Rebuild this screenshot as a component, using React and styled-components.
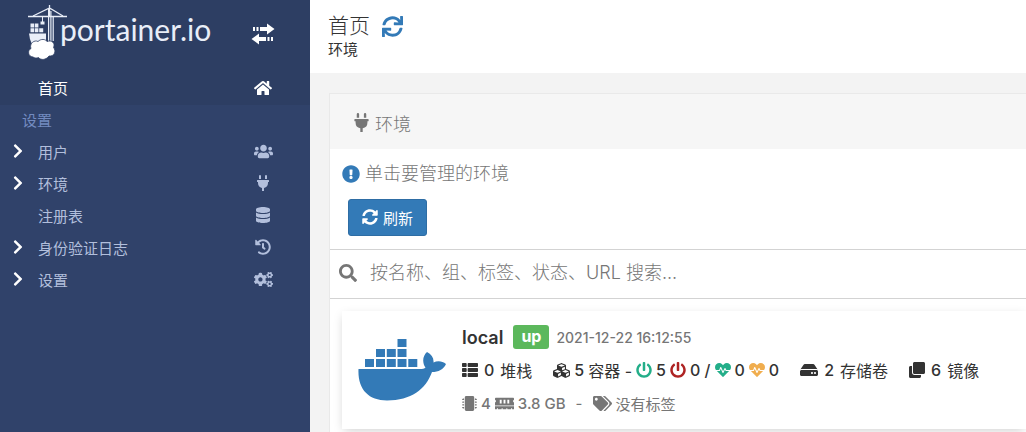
import React, { useState } from 'react'
import styled, { createGlobalStyle } from 'styled-components'
import {
    FaHome,
    FaUsers,
    FaPlug,
    FaDatabase,
    FaHistory,
    FaCogs,
    FaChevronRight,
    FaSync,
    FaSyncAlt,
    FaExclamationCircle,
    FaSearch,
    FaThList,
    FaCubes,
    FaPowerOff,
    FaHeartbeat,
    FaHdd,
    FaClone,
    FaMicrochip,
    FaMemory,
    FaTags,
} from 'react-icons/fa'

const GlobalStyle = createGlobalStyle`
    * {
        box-sizing: border-box;
    }
    body {
        margin: 0;
        background-color: #f3f3f3;
        color: #333333;
        font-family: "Inter", "Noto Sans CJK SC", sans-serif;
        font-size: 15px;
    }
    svg {
        flex-shrink: 0;
    }
`

const Container = styled.div`
    display: flex;
    min-height: 100vh;
    overflow: hidden;
`

// ---------------------------------------------------------------- sidebar

const Sidebar = styled.nav`
    width: 310px;
    flex-shrink: 0;
    background-color: #30426a;
`
const SidebarHeader = styled.div`
    height: 72px;
    display: flex;
    align-items: flex-start;
    justify-content: space-between;
    padding: 5px 35px 0 28px;
    background-color: #2d3e63;
`
const Logo = styled.a`
    display: flex;
    color: #e9eef8;
    text-decoration: none;
`
const LogoText = styled.span`
    font-family: "Lato", sans-serif;
    font-size: 30px;
    line-height: 40px;
    margin-left: -8px;
    padding-top: 4px;
`
const Toggle = styled.button`
    border: none;
    padding: 0;
    margin-top: 18px;
    background: none;
    color: white;
    cursor: pointer;
    display: flex;
`
const Menu = styled.ul`
    list-style: none;
    margin: 0;
    padding: 0;
`
const MenuTitle = styled.li`
    height: 31px;
    line-height: 31px;
    padding-left: 22px;
    color: #738bc0;
`
const MenuLink = styled.a`
    height: ${props => props.$active ? "33px" : "32px"};
    display: grid;
    grid-template-columns: 16px 1fr 20px;
    column-gap: 12px;
    align-items: center;
    justify-items: center;
    padding: 0 37px 2px 10px;
    font-size: 15px;
    text-decoration: none;
    color: ${props => props.$active ? "white" : "#b2bfdc"};
    background-color: ${props => props.$active ? "#2d3e63" : "transparent"};
`
const MenuArrow = styled.span`
    display: flex;
    color: white;
    font-size: 16px;
`
const MenuLabel = styled.span`
    justify-self: start;
`
const MenuIcon = styled.span`
    display: flex;
    font-size: ${props => props.$wide ? "19px" : "16px"};
`

// ---------------------------------------------------------------- content

const Content = styled.main`
    flex: 1;
    min-width: 0;
`
const PageHeader = styled.header`
    height: 73px;
    padding: 12px 18px 0;
    background-color: white;
`
const PageTitle = styled.h1`
    display: flex;
    align-items: center;
    gap: 12px;
    margin: 0;
    font-size: 21px;
    line-height: 28px;
    font-weight: 300;
`
const IconButton = styled.button`
    display: flex;
    border: none;
    padding: 0;
    background: none;
    color: #337ab7;
    font-size: 21px;
    cursor: pointer;
`
const Breadcrumb = styled.div`
    line-height: 20px;
`
const Widget = styled.section`
    margin: 20px 0 0 19px;
    border: 1px solid #e9e9e9;
    border-right: none;
    background-color: white;
    color: #767676;
`
const WidgetHeader = styled.h2`
    display: flex;
    align-items: center;
    gap: 4px;
    height: 55px;
    margin: 0;
    padding: 2px 22px 0;
    background-color: #f6f6f6;
    font-size: 18px;
    font-weight: 300;
`
const Hint = styled.p`
    display: flex;
    align-items: center;
    gap: 5px;
    margin: 0;
    padding: 12px 12px 0;
    font-size: 18px;
    line-height: 26px;
    font-weight: 300;

    svg {
        color: #337ab7;
    }
`
const RefreshButton = styled.button`
    display: flex;
    align-items: center;
    gap: 5px;
    height: 37px;
    margin: 12px 18px 13px;
    padding: 0 13px 1px;
    border: 1px solid #2e6da4;
    border-radius: 3px;
    background-color: #337ab7;
    color: white;
    font: inherit;
    font-size: 15px;
    cursor: pointer;
`
const SearchBar = styled.label`
    display: flex;
    align-items: center;
    gap: 13px;
    height: 50px;
    padding: 0 9px 3px;
    border-top: 1px solid #d3d3d3;
    border-bottom: 1px solid #d3d3d3;
    font-size: 18px;
`
const SearchInput = styled.input`
    flex: 1;
    min-width: 0;
    border: none;
    outline: none;
    padding: 0;
    background: none;
    font: inherit;
    font-weight: 300;
    color: #767676;

    &::placeholder {
        color: #767676;
        opacity: 1;
    }
`
const EndpointList = styled.div`
    padding: 12px 0 20px 12px;
`
const Endpoint = styled.article`
    display: flex;
    align-items: center;
    gap: 16px;
    height: 118px;
    padding: 0 16px;
    background-color: white;
    box-shadow: 0 3px 10px -2px #cccccc;
`
const EndpointInfo = styled.div`
    display: flex;
    flex-direction: column;
    gap: 9px;
`
const Line = styled.div`
    display: flex;
    align-items: center;
    gap: ${props => props.$gap};
    height: 24px;
    font-size: ${props => props.$muted ? "15px" : "16px"};
    white-space: nowrap;
    color: ${props => props.$muted ? "#767676" : "#333333"};
`
const Name = styled.a`
    color: #333333;
    font-size: 18px;
    font-weight: 600;
    text-decoration: none;
`
const Badge = styled.span`
    height: 24px;
    line-height: 23px;
    margin-left: 3px;
    padding: 0 8px;
    border-radius: 3px;
    background-color: #5cb85c;
    color: white;
    font-size: 16px;
    font-weight: 700;
`
const Time = styled.time`
    font-size: 14px;
    font-weight: 500;
    color: #767676;
`
const Stat = styled.span`
    display: flex;
    align-items: center;
    gap: ${props => props.$tight ? "4px" : "6px"};
`
const Num = styled.span`
    font-weight: 500;
`
const StatusIcon = styled.span`
    display: flex;
    font-size: 16px;
    color: ${props => props.color};
`

const menuItems = [
    { label: "用户", icon: <FaUsers />, arrow: true, wide: true },
    { label: "环境", icon: <FaPlug />, arrow: true },
    { label: "注册表", icon: <FaDatabase /> },
    { label: "身份验证日志", icon: <FaHistory />, arrow: true },
    { label: "设置", icon: <FaCogs />, arrow: true, wide: true },
]

const CraneLogo = () => (
    <svg width="40" height="56" viewBox="0 0 40 56" fill="none" stroke="#e9eef8" aria-hidden="true">
        <path d="M0 11.5H39" strokeWidth="1.6" />
        <path d="M5 11L21.5 3L35 11M21.5 0V12" strokeWidth="1.3" />
        <path d="M20.6 4V39M22.900 6V39M25.200 12V36" strokeWidth="1.2" />
        <path d="M14.500 12V17" strokeWidth="1" />
        <path d="M12.500 16.500h4v3h-4z" fill="#e9eef8" stroke="none" />
        <path d="M2.500 18.500h3.600v4H2.500zM6.800 18.500h3.600v4H6.800zM2.500 23.200h3.600v4H2.500zM6.800 23.200h3.600v4H6.800zM11.200 23.200h4v4h-4z" fill="#e9eef8" stroke="none" />
        <path d="M1 28.500H18V38H3.500Q1.500 34 1 28.500z" fill="#e9eef8" stroke="none" />
        <path d="M5 52C-.5 51.500-.5 45 3 43.500C1 38.500 6.500 34.500 10 36.500C13 33.500 17.500 34 19 36.500C24 34.500 27.500 38.500 25.500 42.500C28.500 46 26.500 51.500 21 51C18 55 13 55.500 10.500 52.500C8.500 53.500 6.500 53 5 52z" fill="white" stroke="#2d3e63" strokeWidth=".8" />
    </svg>
)

const TransferIcon = () => (
    <svg width="24" height="22" viewBox="0 0 24 22" fill="currentColor" aria-hidden="true">
        <path d="M2 4h2v4H2zM5.500 4h2v4h-2zM9 4h7V.5L23.500 6L16 11.500V8H9z" />
        <path d="M22 14h-2v4h2zM18.500 14h-2v4h2zM15 14H8v-3.500L.5 16L8 21.500V18h7z" />
    </svg>
)

const DockerIcon = () => (
    <svg width="88" height="62" viewBox="0 0 88 62" fill="#337ab7" aria-hidden="true">
        <path d="M39.500 0h9v8h-9z" />
        <path d="M18 10h9v8h-9zM28.800 10h9v8h-9zM39.500 10h9v8h-9z" />
        <path d="M7 20h9v8H7zM18 20h9v8h-9zM28.800 20h9v8h-9zM39.500 20h9v8h-9zM50.300 20h9v8h-9z" />
        <path d="M.5 30H62C64.500 30 66.500 29.500 67.500 28.500C64 23.500 64.500 17 69 13C73.500 15.500 76 19 75.500 23.500C79.500 21.500 84.500 22 88 25C85.500 30.500 80.500 33 74 33C68 50 53 61.500 29 61.500C10 61.500-.5 50 .5 30z" />
    </svg>
)

const App = () => {
    const [search, setSearch] = useState("")

    return (
        <Container>
            <GlobalStyle />
            <Sidebar>
                <SidebarHeader>
                    <Logo href="#" aria-label="portainer.io">
                        <CraneLogo />
                        <LogoText>portainer.io</LogoText>
                    </Logo>
                    <Toggle aria-label="切换侧边栏"><TransferIcon /></Toggle>
                </SidebarHeader>
                <Menu>
                    <li>
                        <MenuLink href="#home" $active>
                            <MenuArrow />
                            <MenuLabel>首页</MenuLabel>
                            <MenuIcon><FaHome size={18} /></MenuIcon>
                        </MenuLink>
                    </li>
                    <MenuTitle>设置</MenuTitle>
                    {menuItems.map((item) => (
                        <li key={item.label}>
                            <MenuLink href="#">
                                <MenuArrow>{item.arrow && <FaChevronRight />}</MenuArrow>
                                <MenuLabel>{item.label}</MenuLabel>
                                <MenuIcon $wide={item.wide}>{item.icon}</MenuIcon>
                            </MenuLink>
                        </li>
                    ))}
                </Menu>
            </Sidebar>

            <Content>
                <PageHeader>
                    <PageTitle>
                        首页
                        <IconButton aria-label="刷新页面"><FaSync /></IconButton>
                    </PageTitle>
                    <Breadcrumb>环境</Breadcrumb>
                </PageHeader>

                <Widget>
                    <WidgetHeader><FaPlug size={19} />环境</WidgetHeader>
                    <Hint><FaExclamationCircle />单击要管理的环境</Hint>
                    <RefreshButton><FaSyncAlt size={16} />刷新</RefreshButton>
                    <SearchBar>
                        <FaSearch />
                        <SearchInput
                            type="text"
                            aria-label="搜索"
                            placeholder="按名称、组、标签、状态、URL 搜索..."
                            value={search}
                            onChange={(e) => setSearch(e.target.value)}
                        />
                    </SearchBar>
                    <EndpointList>
                        <Endpoint>
                            <DockerIcon />
                            <EndpointInfo>
                                <Line $gap="7px">
                                    <Name href="#local">local</Name>
                                    <Badge>up</Badge>
                                    <Time>2021-12-22 16:12:55</Time>
                                </Line>
                                <Line $gap="21px">
                                    <Stat><FaThList size={16} /><Num>0</Num> 堆栈</Stat>
                                    <Stat $tight>
                                        <FaCubes size={17} /><Num>5</Num> 容器 -
                                        <StatusIcon color="#23ae89"><FaPowerOff /></StatusIcon><Num>5</Num>
                                        <StatusIcon color="#ae2323"><FaPowerOff /></StatusIcon><Num>0 /</Num>
                                        <StatusIcon color="#23ae89"><FaHeartbeat /></StatusIcon><Num>0</Num>
                                        <StatusIcon color="#f0ad4e"><FaHeartbeat /></StatusIcon><Num>0</Num>
                                    </Stat>
                                    <Stat><FaHdd size={18} /><Num>2</Num> 存储卷</Stat>
                                    <Stat><FaClone size={16} /><Num>6</Num> 镜像</Stat>
                                </Line>
                                <Line $gap="10px" $muted>
                                    <Stat $tight>
                                        <FaMicrochip size={15} /><Num>4</Num>
                                        <FaMemory size={19} /><Num>3.8 GB</Num>
                                    </Stat>
                                    -
                                    <Stat $tight><FaTags size={19} />没有标签</Stat>
                                </Line>
                            </EndpointInfo>
                        </Endpoint>
                    </EndpointList>
                </Widget>
            </Content>
        </Container>
    )
}

export default App
